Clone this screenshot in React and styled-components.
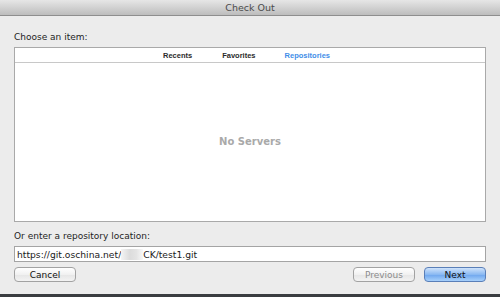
import React, { useState } from 'react';
import styled, { createGlobalStyle } from 'styled-components';

const GlobalStyle = createGlobalStyle`
    html, body {
        margin: 0;
        padding: 0;
        background: #ececec;
    }
    body {
        font-family: "DejaVu Sans", "Liberation Sans", sans-serif;
        -webkit-font-smoothing: antialiased;
    }
`

const Window = styled.div`
    width: 500px;
    height: 297px;
    display: flex;
    flex-direction: column;
    background: #ececec;
    overflow: hidden;
`

const TitleBar = styled.div`
    height: 15px;
    flex: none;
    display: flex;
    align-items: center;
    justify-content: center;
    background: linear-gradient(#e6e6e6, #bdbdbd);
    border-bottom: 1px solid #8e8e8e;
    color: #4b4b4b;
    font-size: 9.5px;
`

const Content = styled.div`
    flex: 1;
    display: flex;
    flex-direction: column;
    padding: 0 14px;
`

const Label = styled.div`
    font-size: 9px;
    color: #1e1e1e;
    margin-top: ${p => p.top}px;
    height: 12px;
    line-height: 12px;
`

const ListBox = styled.div`
    margin-top: 4px;
    height: 173px;
    background: #fff;
    border: 1px solid #a9a9a9;
    display: flex;
    flex-direction: column;
`

const Tabs = styled.div`
    height: 14px;
    flex: none;
    border-bottom: 1px solid #c8c8c8;
    display: flex;
    align-items: center;
    padding-left: 148px;
`

const Tab = styled.button`
    border: 0;
    background: none;
    padding: 0;
    font-family: "Liberation Sans", sans-serif;
    font-size: 7.5px;
    font-weight: bold;
    color: ${p => (p.active ? '#3f8ee8' : '#2a2a2a')};
    margin-right: ${p => p.gap}px;
    cursor: default;
`

const Empty = styled.div`
    flex: 1;
    display: flex;
    align-items: center;
    justify-content: center;
    color: #a9a9a9;
    font-weight: bold;
    font-size: 10px;
    padding-bottom: 2px;
`

const Field = styled.div`
    margin-top: 4px;
    height: 14px;
    background: #fff;
    border: 1px solid #a4a4a4;
    display: flex;
    align-items: center;
    padding-left: 2px;
    font-size: 9.2px;
    color: #1a1a1a;
    white-space: nowrap;
`

const Blur = styled.span`
    display: inline-block;
    width: 22px;
    height: 11px;
    background: linear-gradient(90deg, #f4f4f4, #dcdcdc 40%, #e4e4e4 70%, #f8f8f8);
`

const Buttons = styled.div`
    margin-top: 5px;
    display: flex;
    align-items: center;
`

const Button = styled.button`
    width: 62px;
    height: 15px;
    padding: 0;
    font-family: inherit;
    font-size: 9px;
    border-radius: 4px;
    border: 1px solid ${p => (p.primary ? '#5a7fb8' : '#a2a2a2')};
    color: ${p => (p.disabled ? '#8c8c8c' : '#111')};
    background: ${p => (p.primary
        ? 'linear-gradient(#cfe3fb, #8ab9f2 50%, #6ea6ee 52%, #a7d0fb)'
        : 'linear-gradient(#ffffff, #f1f1f1 50%, #e6e6e6 52%, #f3f3f3)')};
    margin-left: ${p => p.left || 0}px;
    cursor: default;
`

const Spacer = styled.div`
    flex: 1;
`

const BottomEdge = styled.div`
    height: 3px;
    flex: none;
    background: #3a3d40;
`

export default function App() {
    const [tab, setTab] = useState('Repositories')
    const tabs = [
        { name: 'Recents', gap: 30 },
        { name: 'Favorites', gap: 29 },
        { name: 'Repositories', gap: 0 },
    ]

    return (
        <Window>
            <GlobalStyle />
            <TitleBar>Check Out</TitleBar>
            <Content>
                <Label top={15}>Choose an item:</Label>
                <ListBox>
                    <Tabs>
                        {tabs.map(t => (
                            <Tab key={t.name} gap={t.gap} active={tab === t.name} onClick={() => setTab(t.name)}>
                                {t.name}
                            </Tab>
                        ))}
                    </Tabs>
                    <Empty>No Servers</Empty>
                </ListBox>
                <Label top={8}>Or enter a repository location:</Label>
                <Field>
                    https://git.oschina.net/<Blur />CK/test1.git
                </Field>
                <Buttons>
                    <Button>Cancel</Button>
                    <Spacer />
                    <Button disabled>Previous</Button>
                    <Button primary left={9}>Next</Button>
                </Buttons>
            </Content>
            <BottomEdge />
        </Window>
    );
}
